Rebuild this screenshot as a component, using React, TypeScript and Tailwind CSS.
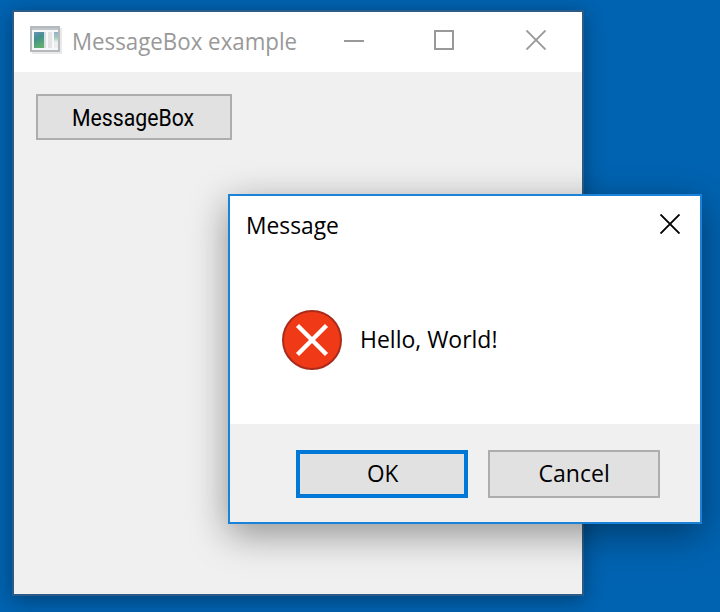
import React from "react";

function AppIcon() {
  return (
    <svg width="32" height="28" viewBox="0 0 32 28" shapeRendering="crispEdges">
      <defs>
        <linearGradient id="pane" x1="0" y1="0" x2="0.3" y2="1">
          <stop offset="0" stopColor="#6c91b8" />
          <stop offset="0.45" stopColor="#40918d" />
          <stop offset="1" stopColor="#5fae70" />
        </linearGradient>
        <linearGradient id="strip" x1="0" y1="0" x2="0" y2="1">
          <stop offset="0" stopColor="#91aecb" />
          <stop offset="0.6" stopColor="#a5ceb9" />
          <stop offset="1" stopColor="#eaf0ec" />
        </linearGradient>
      </defs>
      <rect x="2" y="2" width="30" height="26" fill="#e9e9e9" />
      <rect x="0" y="0" width="30" height="26" fill="#b4b9be" />
      <rect x="2" y="2" width="26" height="2" fill="#c2c6ca" />
      <rect x="2" y="4" width="26" height="20" fill="#f6f7f8" />
      <rect x="4" y="6" width="10" height="16" fill="url(#pane)" />
      <rect x="14" y="6" width="2" height="16" fill="#d6dfe2" />
      <rect x="18" y="6" width="4" height="16" fill="#e4e4e4" />
      <rect x="24" y="6" width="4" height="10" fill="url(#strip)" />
      <rect x="24" y="16" width="4" height="6" fill="#eeeeee" />
    </svg>
  );
}

function CloseGlyph({ color }: { color: string }) {
  return (
    <svg width="20" height="20" viewBox="0 0 20 20">
      <path d="M0.5 0.5L19.5 19.5M19.5 0.5L0.5 19.5" stroke={color} strokeWidth="1.9" fill="none" />
    </svg>
  );
}

function ErrorIcon() {
  return (
    <svg width="60" height="60" viewBox="0 0 60 60">
      <circle cx="30" cy="30" r="29" fill="#f03a17" stroke="#a92b19" strokeWidth="2" />
      <path d="M15.5 15.5L44.5 44.5M44.5 15.5L15.5 44.5" stroke="#fff" strokeWidth="4.4" fill="none" />
    </svg>
  );
}

export default function App() {
  return (
    <div className="relative h-[612px] w-[720px] overflow-hidden bg-[#0063b1] font-['Open_Sans','Noto_Sans',sans-serif] text-[24px] leading-[32px] text-black">
      <section className="absolute left-[12px] top-[10px] h-[586px] w-[572px] border-2 border-[#2a5c87] bg-[#f0f0f0] shadow-[0_4px_20px_rgba(0,0,0,0.34)]">
        <header className="flex h-[60px] items-start bg-white pl-4 pt-[14px] text-[#999]">
          <AppIcon />
          <h1 className="ml-[10px] mt-[-1px] w-[272px] origin-left scale-x-[0.929] whitespace-nowrap">MessageBox example</h1>
          <div className="mt-[14px] h-[2px] w-[20px] bg-[#999]" />
          <div className="ml-[70px] mt-[4px] h-[20px] w-[20px] border-2 border-[#999]" />
          <div className="ml-[72px] mt-[4px]">
            <CloseGlyph color="#999999" />
          </div>
        </header>
        <main className="pl-[22px] pt-[22px]">
          <button className="flex h-[46px] w-[196px] items-center justify-center border-2 border-[#adadad] bg-[#e1e1e1] font-['Roboto',sans-serif]">
            <span className="mt-[2px] mr-[2px] scale-x-[0.885] whitespace-nowrap">MessageBox</span>
          </button>
        </main>
      </section>

      <section className="absolute left-[228px] top-[194px] flex h-[330px] w-[474px] flex-col border-2 border-[#1a82d8] bg-white shadow-[0_10px_36px_rgba(0,0,0,0.4)]">
        <header className="flex h-[60px] items-start justify-between pl-4 pr-[20px] pt-[14px]">
          <h2 className="mt-[-1px] origin-left scale-x-[0.95] whitespace-nowrap">Message</h2>
          <div className="mt-[4px]">
            <CloseGlyph color="#000000" />
          </div>
        </header>
        <div className="flex flex-1 items-start pl-[52px] pt-[54px]">
          <ErrorIcon />
          <p className="ml-[18px] mt-[13px] origin-left scale-x-[0.957] whitespace-nowrap">Hello, World!</p>
        </div>
        <footer className="flex h-[98px] items-start gap-[20px] bg-[#f0f0f0] pl-[66px] pt-[26px]">
          <button className="flex h-[48px] w-[172px] items-center justify-center border-4 border-[#0078d7] bg-[#e1e1e1]">
            <span className="mb-[2px] ml-px scale-x-[0.94]">OK</span>
          </button>
          <button className="flex h-[48px] w-[172px] items-center justify-center border-2 border-[#adadad] bg-[#e1e1e1]">
            <span className="mb-[2px] scale-x-[0.96]">Cancel</span>
          </button>
        </footer>
      </section>
    </div>
  );
}
